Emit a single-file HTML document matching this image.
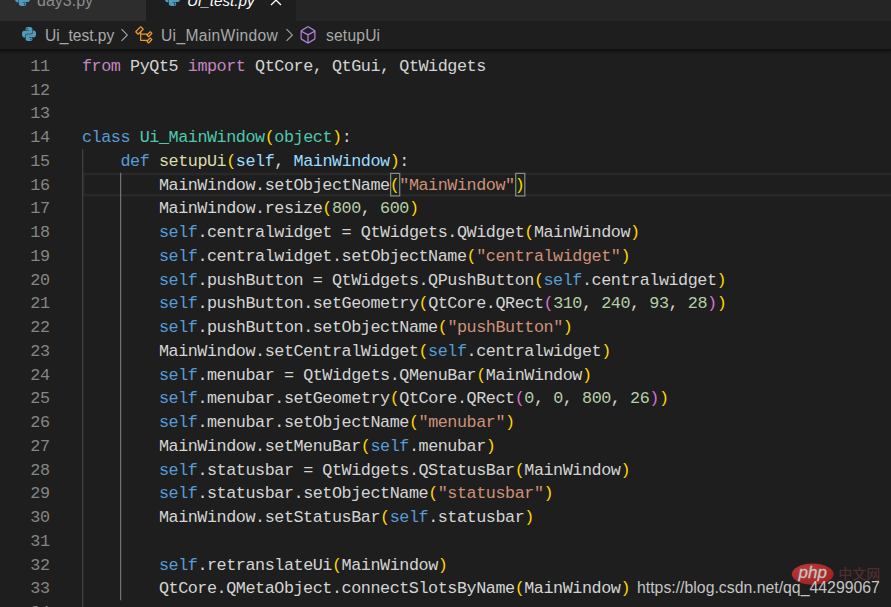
<!DOCTYPE html>
<html><head><meta charset="utf-8"><title>Ui_test.py</title>
<style>
html,body{margin:0;padding:0;}
body{width:891px;height:607px;overflow:hidden;background:#1e1e1e;position:relative;font-family:"Liberation Sans",sans-serif;}
#tabs{position:absolute;left:0;top:0;width:891px;height:21px;background:#252526;overflow:hidden;}
.tab{position:absolute;top:-24px;height:45px;box-sizing:border-box;}
#t1{left:0;width:146px;background:#2d2d2d;}
#t2{left:146px;width:150px;background:#1e1e1e;}
.tab .lbl{position:absolute;top:14.5px;font-size:16px;line-height:20px;white-space:nowrap;}
#t1 .lbl{left:37px;color:#8b8b8b;}
#t2 .lbl{left:41px;color:#ffffff;font-style:italic;font-size:15.2px}
#bc{position:absolute;left:0;top:21px;width:891px;height:28px;background:#1e1e1e;color:#a9a9a9;font-size:15.6px;line-height:28px;white-space:nowrap;}
#bc span{position:absolute;top:0.5px;}#bc svg{margin-top:-1px}
#shadow{position:absolute;left:0;top:49px;width:891px;height:6px;background:linear-gradient(#000 0,rgba(0,0,0,0.55) 30%,rgba(0,0,0,0) 100%);opacity:.55}
#code{position:absolute;left:0;top:54px;width:891px;font-family:"Liberation Mono",monospace;font-size:16.8px;letter-spacing:-0.4566px;color:#d4d4d4;}
.ln{position:relative;height:23.75px;line-height:23.75px;white-space:pre;}
.no{position:absolute;left:0;top:0.85px;width:49.5px;text-align:right;color:#858585;}
.cd{position:absolute;left:82px;top:0.85px;}
.k{color:#c586c0}.b{color:#569cd6}.c{color:#4ec9b0}.f{color:#dcdcaa}.p{color:#9cdcfe}.s{color:#ce9178}.n{color:#b5cea8}.g{color:#ffd700}.o{color:#da70d6}
.guide{position:absolute;width:1px;}
#wm{position:absolute;left:637px;top:578px;font-size:15.84px;line-height:20px;color:#c4c4c4;white-space:nowrap;letter-spacing:0px;}
.ic{position:absolute;overflow:visible}
</style></head><body>
<svg width="0" height="0" style="position:absolute"><defs>
<symbol id="i-py" viewBox="0 0 24 24"><path d="M14.25.18l.9.2.73.26.59.3.45.32.34.34.25.34.16.33.1.3.04.26.02.2-.01.13V8.5l-.05.63-.13.55-.21.46-.26.38-.3.31-.33.25-.35.19-.35.14-.33.1-.3.07-.26.04-.21.02H8.77l-.69.05-.59.14-.5.22-.41.27-.33.32-.27.35-.2.36-.15.37-.1.35-.07.32-.04.27-.02.21v3.06H3.17l-.21-.03-.28-.07-.32-.12-.35-.18-.36-.26-.36-.36-.35-.46-.32-.59-.28-.73-.21-.88-.14-1.05-.05-1.23.06-1.22.16-1.04.24-.87.32-.71.36-.57.4-.44.42-.33.42-.24.4-.16.36-.1.32-.05.24-.01h.16l.06.01h8.16v-.83H6.18l-.01-2.75-.02-.37.05-.34.11-.31.17-.28.25-.26.31-.23.38-.2.44-.18.51-.15.58-.12.64-.1.71-.06.77-.04.84-.02 1.27.05zm-6.3 1.98l-.23.33-.08.41.08.41.23.34.33.22.41.09.41-.09.33-.22.23-.34.08-.41-.08-.41-.23-.33-.33-.22-.41-.09-.41.09zm13.09 3.95l.28.06.32.12.35.18.36.27.36.35.35.47.32.59.28.73.21.88.14 1.04.05 1.23-.06 1.23-.16 1.04-.24.86-.32.71-.36.57-.4.45-.42.33-.42.24-.4.16-.36.09-.32.05-.24.02-.16-.01h-8.22v.82h5.84l.01 2.76.02.36-.05.34-.11.31-.17.29-.25.25-.31.24-.38.2-.44.17-.51.15-.58.13-.64.09-.71.07-.77.04-.84.01-1.27-.04-1.07-.14-.9-.2-.73-.25-.59-.3-.45-.33-.34-.34-.25-.34-.16-.33-.1-.3-.04-.25-.02-.2.01-.13v-5.34l.05-.64.13-.54.21-.46.26-.38.3-.32.33-.24.35-.2.35-.14.33-.1.3-.06.26-.04.21-.02.13-.01h5.84l.69-.05.59-.14.5-.21.41-.28.33-.32.27-.35.2-.36.15-.36.1-.35.07-.32.04-.28.02-.21V6.07h2.09l.14.01zm-6.47 14.25l-.23.33-.08.41.08.41.23.33.33.23.41.08.41-.08.33-.23.23-.33.08-.41-.08-.41-.23-.33-.33-.23-.41-.08-.41.08z"/></symbol>
<symbol id="i-cls" viewBox="0 0 16 16"><path d="M11.34 9.71h.71l2.67-2.67v-.71L13.38 5h-.7l-1.82 1.81h-5V5.56l1.86-1.85V3l-2-2H5L1 5v.71l2 2h.71l1.14-1.15v5.79l.5.5H10v.52l1.33 1.34h.71l2.67-2.67v-.71L13.37 10h-.7l-1.86 1.85h-5v-4H10v.48l1.34 1.38zm1.69-3.65l.63.63-2 2-.63-.63 2-2zm0 5l.63.63-2 2-.63-.63 2-2zM3.35 6.65l-1.29-1.3 3.29-3.29 1.3 1.29-3.3 3.3z"/></symbol>
<symbol id="i-mth" viewBox="0 0 16 16"><path d="M13.51 4l-5-3h-1l-5 3-.49.86v6l.49.85 5 3h1l5-3 .49-.85v-6L13.51 4zm-6 9.56l-4.5-2.7V5.7l4.5 2.45v5.41zM3.27 4.7l4.74-2.84 4.74 2.84-4.74 2.59L3.27 4.7zm9.74 6.16l-4.5 2.7V8.15l4.5-2.45v5.16z"/></symbol>
<symbol id="i-chv" viewBox="0 0 16 16"><path d="M10.072 8.024L5.715 3.667l.618-.62L11 7.716v.618L6.333 13l-.618-.619 4.357-4.357z"/></symbol>
<symbol id="i-clo" viewBox="0 0 16 16"><path d="M8 8.707l3.646 3.647.708-.707L8.707 8l3.647-3.646-.707-.708L8 7.293 4.354 3.646l-.707.708L7.293 8l-3.646 3.646.707.708L8 8.707z"/></symbol>
</defs></svg>
<div id="tabs">
 <div class="tab" id="t1"><svg class="ic" style="left:14.5px;top:14.6px;fill:#519aba" width="15" height="15"><use href="#i-py"/></svg><div class="lbl">day3.py</div></div>
 <div class="tab" id="t2"><svg class="ic" style="left:18.5px;top:14.6px;fill:#519aba" width="15" height="15"><use href="#i-py"/></svg><div class="lbl">Ui_test.py</div><svg class="ic" style="left:119.5px;top:13.6px;fill:#fff" width="20" height="20"><use href="#i-clo"/></svg></div>
</div>
<div id="bc">
 <svg class="ic" style="left:22px;top:6.7px;fill:#519aba" width="14" height="14"><use href="#i-py"/></svg>
 <span style="left:45px">Ui_test.py</span>
 <svg class="ic" style="left:113.9px;top:5.2px;fill:#a9a9a9" width="20" height="20"><use href="#i-chv"/></svg>
 <svg class="ic" style="left:133.75px;top:4.75px;fill:#ee9d28" width="20" height="20"><use href="#i-cls"/></svg>
 <span style="left:161px;letter-spacing:0.34px">Ui_MainWindow</span>
 <svg class="ic" style="left:278.9px;top:5.2px;fill:#a9a9a9" width="20" height="20"><use href="#i-chv"/></svg>
 <svg class="ic" style="left:297.9px;top:4.5px;fill:#b180d7" width="20" height="20"><use href="#i-mth"/></svg>
 <span style="left:326px;letter-spacing:0.2px">setupUi</span>
</div>
<svg id="ov" width="891" height="607" style="position:absolute;left:0;top:0" shape-rendering="auto">
 <rect x="83.25" y="174" width="810" height="21.25" fill="none" stroke="#282828" stroke-width="2.5"/>
 <rect x="82" y="149" width="1.25" height="458" fill="#404040"/>
 <rect x="120" y="172.75" width="1.25" height="427.5" fill="#707070"/>
 <rect x="390.6" y="173.4" width="9.1" height="22.5" fill="#1b251b" stroke="#888888" stroke-width="1.25"/>
 <rect x="515.7" y="173.4" width="9.1" height="22.5" fill="#1b251b" stroke="#888888" stroke-width="1.25"/>
</svg>
<div id="code">
<div class="ln"><span class="no">11</span><span class="cd"><span class="k">from</span> PyQt5 <span class="k">import</span> QtCore, QtGui, QtWidgets</span></div>
<div class="ln"><span class="no">12</span><span class="cd"></span></div>
<div class="ln"><span class="no">13</span><span class="cd"></span></div>
<div class="ln"><span class="no">14</span><span class="cd"><span class="b">class</span> <span class="c">Ui_MainWindow</span><span class="g">(</span><span class="c">object</span><span class="g">)</span>:</span></div>
<div class="ln"><span class="no">15</span><span class="cd">    <span class="b">def</span> <span class="f">setupUi</span><span class="g">(</span><span class="p">self</span>, <span class="p">MainWindow</span><span class="g">)</span>:</span></div>
<div class="ln cur"><span class="no">16</span><span class="cd">        MainWindow.setObjectName<span class="g m">(</span><span class="s">&quot;MainWindow&quot;</span><span class="g m">)</span></span></div>
<div class="ln"><span class="no">17</span><span class="cd">        MainWindow.resize<span class="g">(</span><span class="n">800</span>, <span class="n">600</span><span class="g">)</span></span></div>
<div class="ln"><span class="no">18</span><span class="cd">        <span class="b">self</span>.centralwidget = QtWidgets.QWidget<span class="g">(</span>MainWindow<span class="g">)</span></span></div>
<div class="ln"><span class="no">19</span><span class="cd">        <span class="b">self</span>.centralwidget.setObjectName<span class="g">(</span><span class="s">&quot;centralwidget&quot;</span><span class="g">)</span></span></div>
<div class="ln"><span class="no">20</span><span class="cd">        <span class="b">self</span>.pushButton = QtWidgets.QPushButton<span class="g">(</span><span class="b">self</span>.centralwidget<span class="g">)</span></span></div>
<div class="ln"><span class="no">21</span><span class="cd">        <span class="b">self</span>.pushButton.setGeometry<span class="g">(</span>QtCore.QRect<span class="o">(</span><span class="n">310</span>, <span class="n">240</span>, <span class="n">93</span>, <span class="n">28</span><span class="o">)</span><span class="g">)</span></span></div>
<div class="ln"><span class="no">22</span><span class="cd">        <span class="b">self</span>.pushButton.setObjectName<span class="g">(</span><span class="s">&quot;pushButton&quot;</span><span class="g">)</span></span></div>
<div class="ln"><span class="no">23</span><span class="cd">        MainWindow.setCentralWidget<span class="g">(</span><span class="b">self</span>.centralwidget<span class="g">)</span></span></div>
<div class="ln"><span class="no">24</span><span class="cd">        <span class="b">self</span>.menubar = QtWidgets.QMenuBar<span class="g">(</span>MainWindow<span class="g">)</span></span></div>
<div class="ln"><span class="no">25</span><span class="cd">        <span class="b">self</span>.menubar.setGeometry<span class="g">(</span>QtCore.QRect<span class="o">(</span><span class="n">0</span>, <span class="n">0</span>, <span class="n">800</span>, <span class="n">26</span><span class="o">)</span><span class="g">)</span></span></div>
<div class="ln"><span class="no">26</span><span class="cd">        <span class="b">self</span>.menubar.setObjectName<span class="g">(</span><span class="s">&quot;menubar&quot;</span><span class="g">)</span></span></div>
<div class="ln"><span class="no">27</span><span class="cd">        MainWindow.setMenuBar<span class="g">(</span><span class="b">self</span>.menubar<span class="g">)</span></span></div>
<div class="ln"><span class="no">28</span><span class="cd">        <span class="b">self</span>.statusbar = QtWidgets.QStatusBar<span class="g">(</span>MainWindow<span class="g">)</span></span></div>
<div class="ln"><span class="no">29</span><span class="cd">        <span class="b">self</span>.statusbar.setObjectName<span class="g">(</span><span class="s">&quot;statusbar&quot;</span><span class="g">)</span></span></div>
<div class="ln"><span class="no">30</span><span class="cd">        MainWindow.setStatusBar<span class="g">(</span><span class="b">self</span>.statusbar<span class="g">)</span></span></div>
<div class="ln"><span class="no">31</span><span class="cd">        </span></div>
<div class="ln"><span class="no">32</span><span class="cd">        <span class="b">self</span>.retranslateUi<span class="g">(</span>MainWindow<span class="g">)</span></span></div>
<div class="ln"><span class="no">33</span><span class="cd">        QtCore.QMetaObject.connectSlotsByName<span class="g">(</span>MainWindow<span class="g">)</span></span></div>
<div class="ln"><span class="no">34</span><span class="cd">        </span></div>
</div>
<div id="shadow"></div>
<svg id="php" width="100" height="30" style="position:absolute;left:786px;top:560px;overflow:visible">
 <defs><radialGradient id="pg" cx="35%" cy="30%" r="80%"><stop offset="0" stop-color="#bb3a3a"/><stop offset="1" stop-color="#a01f1f"/></radialGradient></defs>
 <ellipse cx="26.7" cy="14.2" rx="20.9" ry="10.7" fill="url(#pg)"/>
 <text x="12.6" y="18.2" font-family="Liberation Sans, sans-serif" font-style="italic" font-size="17" fill="#c4c4c4" stroke="#c4c4c4" stroke-width="0.3">php</text>
 <text x="52.2" y="19.2" font-family="Noto Sans CJK SC, sans-serif" font-size="14" font-weight="500" fill="#4c2e2e" textLength="42" lengthAdjust="spacingAndGlyphs">中文网</text>
</svg>
<div id="wm">https://blog.csdn.net/qq_44299067</div>
</body></html>
